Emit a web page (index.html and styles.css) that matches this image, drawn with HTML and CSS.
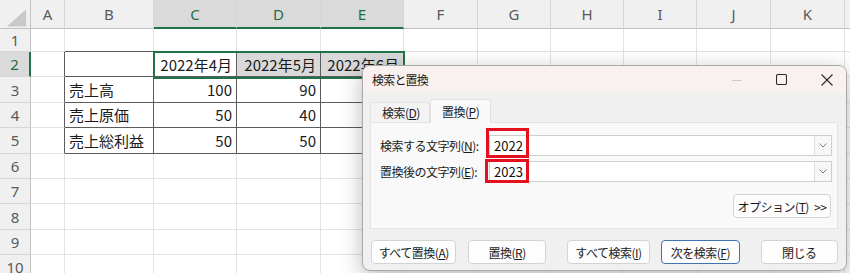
FILE: index.html
```html
<!DOCTYPE html>
<html lang="ja">
<head>
  <meta charset="UTF-8" />
  <title>検索と置換</title>
  <link rel="stylesheet" href="styles.css">
</head>
<body>

  <div class="sheet">
    <div class="grid" id="grid"></div>

    <!-- green range selection C2:E2 -->
    <div class="selection"></div>

    <div class="dialog">
      <div class="titlebar">
        <span class="title">検索と置換</span>
        <div class="caption">
          <svg width="10" height="10" viewBox="0 0 10 10"><path d="M0 5.5h10" stroke="#c9c9c9" stroke-width="1"/></svg>
          <svg width="11" height="11" viewBox="0 0 11 11"><rect x="0.5" y="0.5" width="10" height="10" rx="1.5" fill="none" stroke="#2b2b2b" stroke-width="1.1"/></svg>
          <svg width="12" height="12" viewBox="0 0 12 12"><path d="M0.5 0.5l11 11M11.5 0.5l-11 11" stroke="#2b2b2b" stroke-width="1.1"/></svg>
        </div>
      </div>

      <div class="dlg-body">
        <div class="tabs">
          <div class="tab">検索(<u>D</u>)</div>
          <div class="tab active">置換(<u>P</u>)</div>
        </div>

        <div class="panel">
          <div class="fields">
            <label>検索する文字列(<u>N</u>):</label>
            <div class="combo">
              <span>2022</span>
              <span class="drop"><svg width="8" height="5" viewBox="0 0 8 5"><path d="M0.5 0.5l3.5 3.5 3.5-3.5" fill="none" stroke="#7a7a7a" stroke-width="1"/></svg></span>
              <span class="mark mark-find"></span>
            </div>

            <label>置換後の文字列(<u>E</u>):</label>
            <div class="combo">
              <span>2023</span>
              <span class="drop"><svg width="8" height="5" viewBox="0 0 8 5"><path d="M0.5 0.5l3.5 3.5 3.5-3.5" fill="none" stroke="#7a7a7a" stroke-width="1"/></svg></span>
              <span class="mark mark-repl"></span>
            </div>
          </div>

          <div class="opt-row">
            <button class="btn btn-opt">オプション(<u>T</u>) &gt;&gt;</button>
          </div>
        </div>

        <div class="actions">
          <button class="btn btn-repl-all">すべて置換(<u>A</u>)</button>
          <button class="btn btn-repl">置換(<u>R</u>)</button>
          <button class="btn btn-find-all">すべて検索(<u>I</u>)</button>
          <button class="btn btn-next default">次を検索(<u>F</u>)</button>
          <button class="btn btn-close">閉じる</button>
        </div>
      </div>
    </div>
  </div>

  <script>
    const grid = document.getElementById("grid");
    const cols = ["", "A", "B", "C", "D", "E", "F", "G", "H", "I", "J", "K", ""];

    const data = {
      C2: "2022年4月", D2: "2022年5月", E2: "2022年6月",
      B3: "売上高",    C3: "100", D3: "90", E3: "80",
      B4: "売上原価",  C4: "50",  D4: "40", E4: "35",
      B5: "売上総利益", C5: "50",  D5: "50", E5: "45"
    };

    const corner = '<svg width="31" height="29" viewBox="0 0 31 29"><path d="M7 27H27V9Z" fill="#c9c9c9"/></svg>';

    for (let r = 0; r <= 10; r++) {
      cols.forEach((col, c) => {
        const el = document.createElement("div");

        if (r === 0 && c === 0) {
          el.className = "hd corner";
          el.innerHTML = corner;
        } else if (r === 0) {
          el.className = "hd col-hd";
          el.textContent = col;
          if (c >= 3 && c <= 5) el.classList.add("on");
        } else if (c === 0) {
          el.className = "hd row-hd";
          el.textContent = r;
          if (r === 2) el.classList.add("on");
        } else {
          const ref = col + r;
          const v = data[ref];
          el.className = "cell";
          if (v) {
            el.textContent = v;
            if (/^\d/.test(v)) el.classList.add("num");
          }
          // table B2:E5 gets the dark borders
          if (r >= 2 && r <= 5 && c >= 2 && c <= 5) el.classList.add("tb");
          if (r === 1 && c >= 2 && c <= 5) el.classList.add("tb-above");
          if (c === 1 && r >= 2 && r <= 5) el.classList.add("tb-left");
          if (ref === "D2" || ref === "E2") el.classList.add("picked");
        }
        grid.appendChild(el);
      });
    }
  </script>

</body>
</html>
```

FILE: styles.css
```css
* {
  box-sizing: border-box;
}

body {
  margin: 0;
  background: #ffffff;
  font-family: "Noto Sans", "Noto Sans CJK JP", sans-serif;
}

.sheet {
  position: relative;
  width: 850px;
  height: 273px;
  overflow: hidden;
}

/* spreadsheet */

.grid {
  display: grid;
  width: max-content;
  grid-template-columns: 31px 34px 89px 83px 84px 83px 74px 73px 73px 73px 74px 74px 60px;
  grid-template-rows: 29px 23px repeat(9, 25.4px);
}

.hd {
  display: flex;
  align-items: center;
  justify-content: center;
  background: #f0f0f0;
  color: #5a5a5a;
  font-size: 15px;
  border-right: 1px solid #d6d6d6;
  border-bottom: 1px solid #d6d6d6;
}

.corner {
  border-right-color: #c2c2c2;
  border-bottom-color: #c2c2c2;
}

.col-hd {
  border-bottom-color: #c2c2c2;
}

.row-hd {
  border-right-color: #c2c2c2;
}

.hd.on {
  background: #dadada;
  color: #1f6e42;
}

.col-hd.on {
  border-bottom: 2px solid #217346;
}

.row-hd.on {
  border-right: 2px solid #217346;
}

.cell {
  display: flex;
  align-items: center;
  padding: 0 4px;
  font-family: "Noto Sans CJK JP", sans-serif;
  font-size: 15px;
  color: #1a1a1a;
  white-space: nowrap;
  overflow: hidden;
  border-right: 1px solid #e2e2e2;
  border-bottom: 1px solid #e2e2e2;
}

.cell.num {
  justify-content: flex-end;
}

.cell.tb {
  border-right-color: #5c5c5c;
  border-bottom-color: #5c5c5c;
}

.cell.tb-above {
  border-bottom-color: #5c5c5c;
}

.cell.tb-left {
  border-right-color: #5c5c5c;
}

.cell.picked {
  background: #d9d9d9;
}

.selection {
  position: absolute;
  left: 153px;
  top: 51px;
  width: 252px;
  height: 28px;
  border: 2px solid #217346;
  pointer-events: none;
}

/* dialog */

.dialog {
  position: absolute;
  left: 362px;
  top: 65px;
  width: 485px;
  height: 206px;
  background: #f0f0f0;
  border: 1px solid #a9a9a9;
  border-radius: 8px;
  box-shadow: 0 6px 22px rgba(0, 0, 0, 0.28);
  overflow: hidden;
  font-family: "Noto Sans CJK JP", sans-serif;
  font-size: 12px;
  letter-spacing: -0.5px;
  color: #1b1b1b;
}

.titlebar {
  display: flex;
  align-items: center;
  height: 27px;
  padding-left: 9px;
  background: #f9f1ef;
}

.title {
  letter-spacing: -0.8px;
}

.caption {
  display: flex;
  align-items: center;
  gap: 34px;
  margin-left: auto;
  padding-right: 13px;
}

.dlg-body {
  padding: 6px 8px 0 7px;
}

.tabs {
  display: flex;
  align-items: flex-end;
  height: 23px;
}

.tab {
  width: 60px;
  height: 20px;
  padding-left: 11px;
  line-height: 19px;
  background: #f3f3f3;
  border: 1px solid #e2e2e2;
  border-bottom: none;
  border-radius: 3px 3px 0 0;
}

.tab.active {
  position: relative;
  width: 61px;
  height: 24px;
  margin-bottom: -1px;
  line-height: 24px;
  background: #f9f9f9;
}

.panel {
  width: 468px;
  height: 107px;
  padding: 12px 5px 0 9px;
  background: #f9f9f9;
  border: 1px solid #e3e3e3;
}

.fields {
  display: grid;
  grid-template-columns: 109px 1fr;
  grid-auto-rows: 21px;
  row-gap: 5px;
  align-items: center;
}

.fields label {
  white-space: nowrap;
}

.combo {
  position: relative;
  display: flex;
  align-items: center;
  height: 21px;
  padding-left: 4px;
  background: #ffffff;
  border: 1px solid #cfcfcf;
  font-size: 13px;
  letter-spacing: 0;
  color: #111;
}

.drop {
  display: flex;
  align-items: center;
  justify-content: center;
  width: 17px;
  height: 100%;
  margin-left: auto;
  background: #f7f7f7;
  border-left: 1px solid #dcdcdc;
}

.mark {
  position: absolute;
  border: 3px solid #e5101d;
  pointer-events: none;
}

.mark-find {
  left: -4px;
  top: -8px;
  width: 43px;
  height: 30px;
}

.mark-repl {
  left: -5px;
  top: -3px;
  width: 44px;
  height: 24px;
}

.opt-row {
  display: flex;
  justify-content: flex-end;
  margin-top: 12px;
  padding-right: 1px;
}

.btn {
  height: 24px;
  padding: 0;
  background: #fdfdfd;
  border: 1px solid #d3d3d3;
  border-radius: 4px;
  font-family: inherit;
  font-size: 12px;
  letter-spacing: inherit;
  color: #1b1b1b;
}

.btn.default {
  border-color: #4272b4;
}

.btn-opt {
  width: 98px;
  word-spacing: 3px;
}

.actions {
  display: flex;
  margin-top: 11px;
}

.btn-repl-all {
  width: 86px;
  margin-left: 1px;
}

.btn-repl {
  width: 78px;
  margin-left: 12px;
}

.btn-find-all {
  width: 84px;
  margin-left: 21px;
}

.btn-next {
  width: 79px;
  margin-left: 11px;
}

.btn-close {
  width: 78px;
  margin-left: 21px;
}
```
